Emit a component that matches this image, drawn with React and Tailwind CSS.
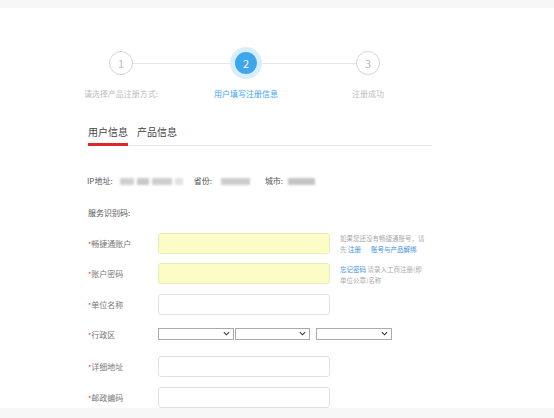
import React from "react";

const font = { fontFamily: '"Noto Sans CJK SC", "Noto Sans", sans-serif' };

function Chevron() {
  return (
    <svg className="w-[7px] h-[5px]" viewBox="0 0 8 5" fill="none">
      <path d="M1 1l3 3 3-3" stroke="#333" strokeWidth="1.2" />
    </svg>
  );
}

function Label({ children }) {
  return (
    <div className="w-[70px] text-[8px] text-[#777] leading-[10px]">
      <span className="text-[#e33] text-[7px]">*</span>
      {children}
    </div>
  );
}

function Input({ yellow }) {
  return (
    <div
      className={
        yellow
          ? "w-[172px] h-[21px] rounded-[3px] border border-[#ecebb8] bg-[#fcfcc7]"
          : "w-[172px] h-[21px] rounded-[3px] border border-[#e2e2e2] bg-white"
      }
    ></div>
  );
}

function Select({ w }) {
  return (
    <div
      className={`${w} h-[12px] border border-[#aaa] bg-white flex items-center justify-end pr-[3px]`}
    >
      <Chevron />
    </div>
  );
}

export default function App() {
  return (
    <div className="w-[554px] h-[418px] bg-white overflow-hidden flex flex-col" style={font}>
      <div className="h-[8px] bg-[#f7f7f7]"></div>

      <div className="flex-1">
        {/* Steps */}
        <div className="flex items-center ml-[109px] mt-[39px]">
          <div className="w-6 h-6 rounded-full border border-[#d5d5d5] flex items-center justify-center text-[11px] text-[#bbb]">
            1
          </div>
          <div className="w-[97px] h-px bg-[#e6e6e6]"></div>
          <div className="w-8 h-8 rounded-full bg-[#d9eefc] flex items-center justify-center">
            <div className="w-[22px] h-[22px] rounded-full bg-[#3ea5ef] flex items-center justify-center text-[11px] text-white">
              2
            </div>
          </div>
          <div className="w-[94px] h-px bg-[#e6e6e6]"></div>
          <div className="w-6 h-6 rounded-full border border-[#d5d5d5] flex items-center justify-center text-[11px] text-[#bbb]">
            3
          </div>
        </div>
        <div className="flex ml-[81px] mt-[10px] text-[8px] leading-[10px]">
          <div className="w-[80px] text-center text-[#bbb]">请选择产品注册方式:</div>
          <div className="w-[80px] ml-[45px] text-center text-[#3ea5ef]">用户填写注册信息</div>
          <div className="w-[80px] ml-[42px] text-center text-[#bbb]">注册成功</div>
        </div>

        {/* Tabs */}
        <div className="ml-[88px] w-[344px] mt-[27px] border-b border-[#e8e8e8] flex text-[10px] leading-[12px] text-[#444]">
          <div className="pb-[5px] border-b-[3px] border-[#e0252b] -mb-px">用户信息</div>
          <div className="ml-[9px] pb-[5px]">产品信息</div>
        </div>

        {/* IP row */}
        <div className="ml-[87px] mt-[30px] flex items-center text-[8px] leading-[10px] text-[#555]">
          <span>IP地址:</span>
          <span className="ml-[7px] flex gap-[3px] blur-[1px]">
            <span className="w-[14px] h-[7px] bg-[#d0d0d0]"></span>
            <span className="w-[12px] h-[7px] bg-[#c8c8c8]"></span>
            <span className="w-[20px] h-[7px] bg-[#cfcfcf]"></span>
            <span className="w-[8px] h-[7px] bg-[#e2e2e2]"></span>
          </span>
          <span className="ml-[11px]">省份:</span>
          <span className="ml-[9px] w-[29px] h-[7px] bg-[#cdcdcd] blur-[1px]"></span>
          <span className="ml-[15px]">城市:</span>
          <span className="ml-[5px] w-[27px] h-[7px] bg-[#c4c4c4] blur-[1px]"></span>
        </div>

        <div className="ml-[88px] mt-[22px] text-[8px] leading-[10px] text-[#555]">服务识别码:</div>

        {/* Form rows */}
        <div className="ml-[88px] mt-[15px] h-[21px] flex items-center">
          <Label>畅捷通账户</Label>
          <Input yellow />
          <div className="ml-[10px] w-[88px] text-[6.5px] leading-[11px] text-[#aaa]">
            <div>如果您还没有畅捷通账号，请</div>
            <div>
              先 <span className="text-[#3b8fe0]">注册</span>
              <span className="ml-[10px] text-[#3b8fe0]">账号与产品解绑</span>
            </div>
          </div>
        </div>

        <div className="ml-[88px] mt-[9px] h-[21px] flex items-center">
          <Label>账户密码</Label>
          <Input yellow />
          <div className="ml-[10px] w-[88px] text-[6.5px] leading-[11px] text-[#aaa] mt-[2px]">
            <div>
              <span className="text-[#3b8fe0]">忘记密码</span> 请录入工商注册(即
            </div>
            <div>单位公章)名称</div>
          </div>
        </div>

        <div className="ml-[88px] mt-[10px] h-[21px] flex items-center">
          <Label>单位名称</Label>
          <Input />
        </div>

        <div className="ml-[88px] mt-[8px] flex items-center h-[21px]">
          <div className="mt-[3px]">
            <Label>行政区</Label>
          </div>
          <div className="flex items-center">
            <Select w="w-[76px]" />
            <div className="ml-px">
              <Select w="w-[75px]" />
            </div>
            <div className="ml-[6px]">
              <Select w="w-[76px]" />
            </div>
          </div>
        </div>

        <div className="ml-[88px] mt-[12px] h-[21px] flex items-center">
          <Label>详细地址</Label>
          <Input />
        </div>

        <div className="ml-[88px] mt-[10px] h-[21px] flex items-center">
          <Label>邮政编码</Label>
          <Input />
        </div>
      </div>

      <div className="h-[10px] bg-[#f7f7f7]"></div>
    </div>
  );
}
